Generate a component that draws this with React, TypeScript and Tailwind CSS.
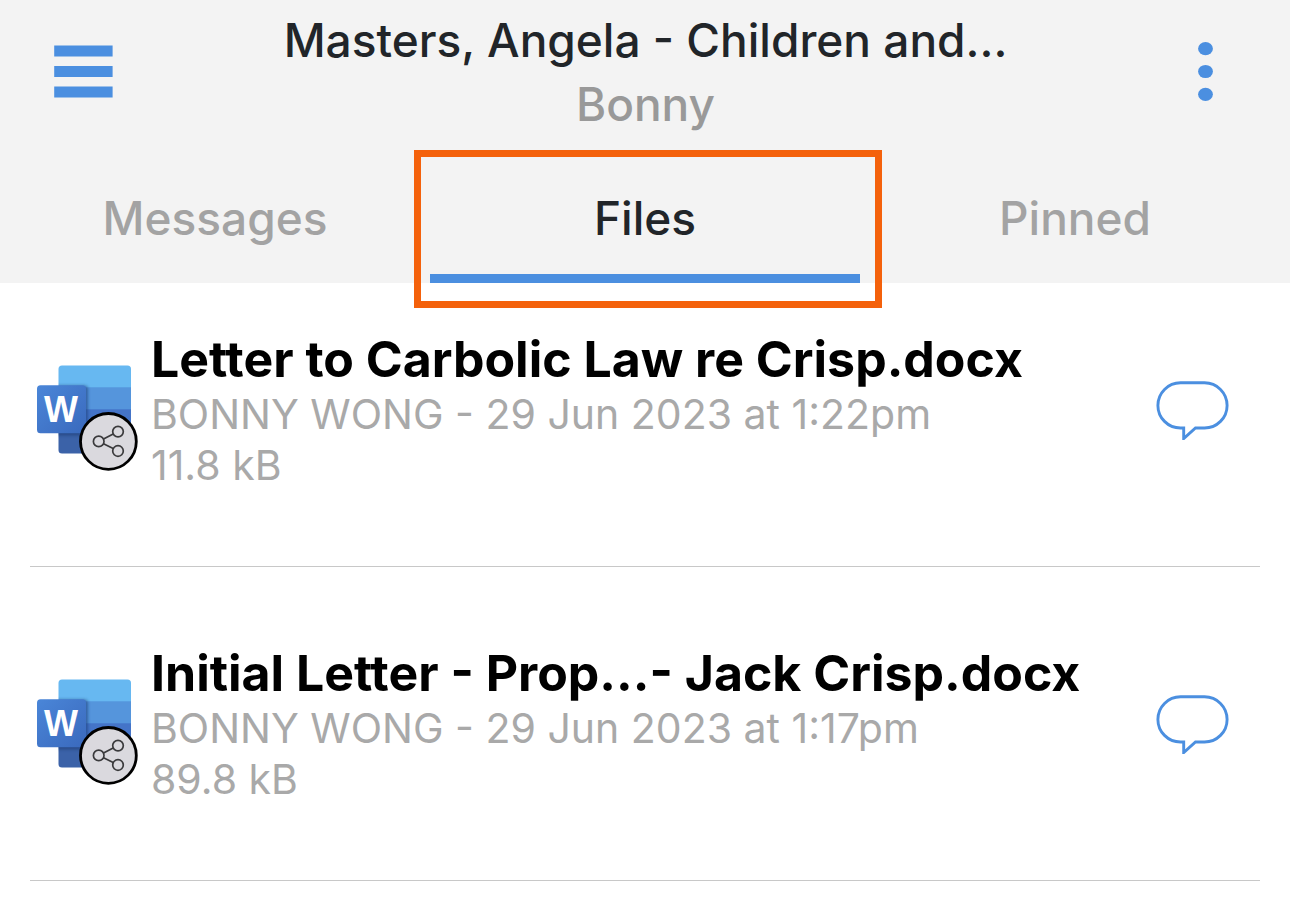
import React from "react";

type FileItem = { id: number; name: string; meta: string; size: string };

const files: FileItem[] = [
  { id: 1, name: "Letter to Carbolic Law re Crisp.docx", meta: "BONNY WONG - 29 Jun 2023 at 1:22pm", size: "11.8 kB" },
  { id: 2, name: "Initial Letter - Prop...- Jack Crisp.docx", meta: "BONNY WONG - 29 Jun 2023 at 1:17pm", size: "89.8 kB" },
];

const tabs = ["Messages", "Files", "Pinned"];

function MenuIcon() {
  return (
    <svg width="60" height="54" viewBox="0 0 60 54" fill="#4b8fe0" aria-hidden="true">
      <rect x="0.2" y="0.5" width="58.4" height="11" />
      <rect x="0.2" y="21" width="58.4" height="11" />
      <rect x="0.2" y="41.5" width="58.4" height="11" />
    </svg>
  );
}

function DotsIcon() {
  return (
    <svg width="16" height="60" viewBox="0 0 16 60" fill="#4b8fe0" aria-hidden="true">
      <ellipse cx="8.5" cy="6.7" rx="7.4" ry="6.6" />
      <ellipse cx="8.5" cy="29.5" rx="7.4" ry="6.6" />
      <ellipse cx="8.5" cy="52.3" rx="7.4" ry="6.6" />
    </svg>
  );
}

function WordIcon({ id }: { id: number }) {
  const clip = `page-${id}`;
  const tile = `tile-${id}`;
  const shade = `shade-${id}`;
  return (
    <svg width="104" height="108" viewBox="36 364 104 108" aria-hidden="true">
      <defs>
        <clipPath id={clip}>
          <rect x="58.5" y="365.5" width="72.5" height="88" rx="3.5" />
        </clipPath>
        <linearGradient id={tile} x1="0" y1="0" x2="1" y2="1">
          <stop offset="0" stopColor="#4a86d8" />
          <stop offset="1" stopColor="#3a69bd" />
        </linearGradient>
        <filter id={shade} x="-20%" y="-20%" width="140%" height="140%">
          <feGaussianBlur stdDeviation="1.5" />
        </filter>
      </defs>
      <g clipPath={`url(#${clip})`}>
        <rect x="58" y="365" width="74" height="23" fill="#67b8f1" />
        <rect x="58" y="387.3" width="74" height="23" fill="#5595dc" />
        <rect x="58" y="409.3" width="74" height="23" fill="#4474c8" />
        <rect x="58" y="431.5" width="74" height="23" fill="#3b62a8" />
        <rect x="38" y="385.5" width="50" height="50" rx="3.5" fill="#17386f" opacity="0.55" filter={`url(#${shade})`} />
      </g>
      <rect x="37" y="385.3" width="49" height="48" rx="3.5" fill={`url(#${tile})`} />
      <text x="61" y="422.3" textAnchor="middle" fill="#fff" fontFamily="'Liberation Sans', sans-serif" fontWeight="700" fontSize="36">
        W
      </text>
      <circle cx="108.4" cy="441.4" r="27.9" fill="#dad9de" stroke="#000" strokeWidth="2.8" />
      <g fill="none" stroke="#3a3a3c" strokeWidth="1.7">
        <circle cx="98.7" cy="441.4" r="5.3" />
        <circle cx="118" cy="431.6" r="5.3" />
        <circle cx="118" cy="451" r="5.3" />
        <path d="M103.5 439 113.2 434M103.5 443.8 113.2 448.6" />
      </g>
    </svg>
  );
}

function CommentIcon() {
  return (
    <svg width="74" height="60" viewBox="15 10 74 60" fill="none" stroke="#4b8fe0" strokeWidth="2.9" aria-hidden="true">
      <path d="M40.5 12.8H64.5A22.6 22.6 0 0 1 64.5 58H55.5L43.7 68.6V58H40.5A22.6 22.6 0 0 1 40.5 12.8Z" />
    </svg>
  );
}

export default function App() {
  return (
    <div className="min-h-screen bg-white font-['Inter',sans-serif]">
      <header className="bg-[#f3f3f3] pt-2">
        <div className="flex items-center justify-between pl-[54px] pr-[77px]">
          <button type="button" aria-label="Menu" className="flex w-[60px] shrink-0">
            <MenuIcon />
          </button>
          <div className="min-w-0 flex-1 pr-5 text-center text-[46px] font-medium leading-[64px]">
            <h1 className="truncate text-[#212529]">Masters, Angela - Children and...</h1>
            <p className="text-[#999]">Bonny</p>
          </div>
          <button type="button" aria-label="More options" className="flex shrink-0">
            <DotsIcon />
          </button>
        </div>
        <nav role="tablist" aria-label="Conversation sections" className="grid grid-cols-3">
          {tabs.map((tab) =>
            tab === "Files" ? (
              <button key={tab} type="button" role="tab" aria-selected="true" className="relative flex flex-col pt-[50px] text-[46px] font-medium leading-[64px] text-[#212529]">
                <span className="w-full pb-6 text-center">{tab}</span>
                <span className="h-[9px] w-full bg-[#4b8fe0]" />
                <span className="pointer-events-none absolute -bottom-[25px] -left-4 -right-[22px] top-[14px] border-7 border-[#f4610b]" />
              </button>
            ) : (
              <button key={tab} type="button" role="tab" aria-selected="false" className="pb-[33px] pt-[50px] text-center text-[46px] font-medium leading-[64px] text-[#a3a3a3]">
                {tab}
              </button>
            ),
          )}
        </nav>
      </header>
      <ul className="px-[30px]">
        {files.map((file) => (
          <li key={file.id} className="flex items-center border-b border-[#c8c8c8] pb-[75px] pl-[6px] pr-[31px] pt-[76px] first:pt-[46px]">
            <div className="shrink-0 pt-4">
              <WordIcon id={file.id} />
            </div>
            <div className="min-w-0 flex-1 pl-[11px]">
              <h2 className="truncate text-[50px] font-bold leading-[60px] text-black">{file.name}</h2>
              <p className="text-[41px] leading-[51px] text-[#a9a9a9]">{file.meta}</p>
              <p className="text-[41px] leading-[51px] text-[#a9a9a9]">{file.size}</p>
            </div>
            <button type="button" aria-label={`Comments on ${file.name}`} className="shrink-0">
              <CommentIcon />
            </button>
          </li>
        ))}
      </ul>
    </div>
  );
}
